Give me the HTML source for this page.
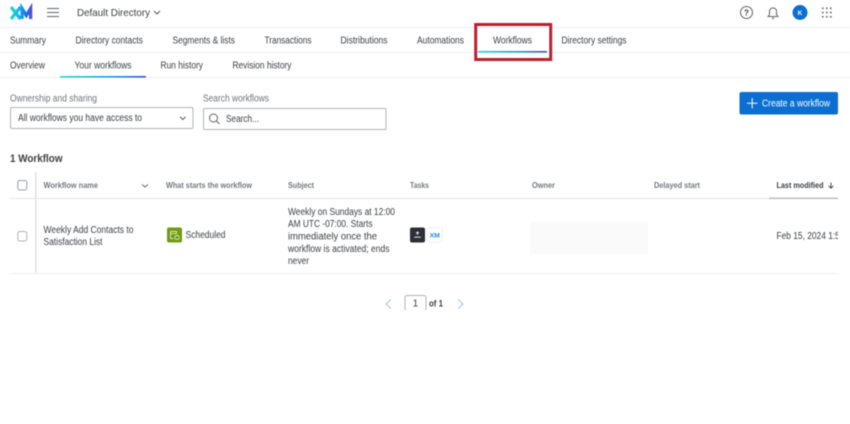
<!DOCTYPE html>
<html lang="en">
<head>
<meta charset="utf-8">
<title>Workflows</title>
<style>
html,body{margin:0;padding:0;background:#fff;width:850px;height:424px;overflow:hidden}
svg{display:block;filter:blur(.45px)}
text{font-family:"Liberation Sans",sans-serif;font-size:9.7px;fill:#3a3e43}
.h{font-size:8.4px;font-weight:bold;fill:#73787e}
.l{fill:#6f7479}
</style>
</head>
<body>
<svg width="850" height="424" viewBox="0 0 850 424" xmlns="http://www.w3.org/2000/svg">
<defs>
<linearGradient id="g" gradientUnits="userSpaceOnUse" x1="10" x2="32" y1="0" y2="0"><stop offset="0" stop-color="#1fe0c0"/><stop offset=".4" stop-color="#12b4f0"/><stop offset=".7" stop-color="#1a78e8"/><stop offset="1" stop-color="#5a48d8"/></linearGradient>
<linearGradient id="u" x1="0" x2="1" y1="0" y2="0"><stop offset="0" stop-color="#2ad4e0"/><stop offset=".6" stop-color="#1a9be0"/><stop offset="1" stop-color="#3f4fc4"/></linearGradient>
<clipPath id="c"><rect x="770" y="225" width="68" height="20"/></clipPath>
</defs>

<!-- top bar -->
<path d="M11 7 L20.5 19 M20.5 7 L11 19" stroke="url(#g)" stroke-width="3.3" fill="none"/>
<path d="M22 19 V8.5 L26.3 15.5 L30.6 8.5 V19" stroke="url(#g)" stroke-width="3.3" fill="none"/>
<path d="M47 8.5H59M47 12.5H59M47 16.5H59" stroke="#5f6368" stroke-width="1.1"/>
<text x="77" y="16" textLength="73" lengthAdjust="spacingAndGlyphs" style="font-size:10.4px">Default Directory</text>
<path d="M154 11 L157 14 L160 11" stroke="#555" stroke-width="1" fill="none"/>

<circle cx="746.5" cy="12.5" r="6" fill="none" stroke="#5f6368" stroke-width="1"/>
<text x="746.5" y="15.5" text-anchor="middle" style="font-size:8px;font-weight:bold">?</text>
<path d="M768 16.5 L769.5 14.5 V10.5 A3.7 3.7 0 0 1 776.5 10.5 V14.5 L778 16.5 Z" fill="none" stroke="#5f6368" stroke-width="1"/>
<path d="M772 18.3 H774" stroke="#5f6368" stroke-width="1.2"/>
<circle cx="800" cy="12.5" r="7.5" fill="#0b6ed0"/>
<text x="800" y="15" text-anchor="middle" style="font-size:6.5px;font-weight:bold;fill:#fff">K</text>
<g fill="#5f6368">
<rect x="822" y="7.5" width="1.6" height="1.6"/><rect x="826" y="7.5" width="1.6" height="1.6"/><rect x="830" y="7.5" width="1.6" height="1.6"/>
<rect x="822" y="11.7" width="1.6" height="1.6"/><rect x="826" y="11.7" width="1.6" height="1.6"/><rect x="830" y="11.7" width="1.6" height="1.6"/>
<rect x="822" y="16" width="1.6" height="1.6"/><rect x="826" y="16" width="1.6" height="1.6"/><rect x="830" y="16" width="1.6" height="1.6"/>
</g>
<rect x="0" y="27" width="850" height="1" fill="#eeeeee"/>

<!-- tabs -->
<text x="10" y="43.5" textLength="36" lengthAdjust="spacingAndGlyphs">Summary</text>
<text x="75.5" y="43.5" textLength="67.5" lengthAdjust="spacingAndGlyphs">Directory contacts</text>
<text x="172.5" y="43.5" textLength="62.5" lengthAdjust="spacingAndGlyphs">Segments &amp; lists</text>
<text x="264.5" y="43.5" textLength="47" lengthAdjust="spacingAndGlyphs">Transactions</text>
<text x="340.5" y="43.5" textLength="47" lengthAdjust="spacingAndGlyphs">Distributions</text>
<text x="417" y="43.5" textLength="47" lengthAdjust="spacingAndGlyphs">Automations</text>
<text x="493" y="43.5" textLength="39" lengthAdjust="spacingAndGlyphs">Workflows</text>
<text x="561.5" y="43.5" textLength="65" lengthAdjust="spacingAndGlyphs">Directory settings</text>
<rect x="0" y="52" width="850" height="1" fill="#eeeeee"/>
<rect x="478" y="51" width="69" height="1.6" fill="url(#u)"/>
<rect x="475.7" y="24.5" width="75" height="35" fill="none" stroke="#b9202f" stroke-width="3"/>

<!-- sub tabs -->
<text x="10" y="68.5" textLength="35" lengthAdjust="spacingAndGlyphs">Overview</text>
<text x="74.5" y="68.5" textLength="57" lengthAdjust="spacingAndGlyphs">Your workflows</text>
<text x="160.5" y="68.5" textLength="42.5" lengthAdjust="spacingAndGlyphs">Run history</text>
<text x="232.5" y="68.5" textLength="59" lengthAdjust="spacingAndGlyphs">Revision history</text>
<rect x="0" y="77" width="850" height="1" fill="#eeeeee"/>
<rect x="60" y="76" width="86" height="1.6" fill="url(#u)"/>

<!-- filters -->
<text class="l" x="10" y="101.5" textLength="87" lengthAdjust="spacingAndGlyphs">Ownership and sharing</text>
<text class="l" x="203" y="101.5" textLength="66" lengthAdjust="spacingAndGlyphs">Search workflows</text>
<rect x="10.5" y="107.5" width="182.5" height="21" rx="1.5" fill="#fff" stroke="#b0b3b7"/>
<text x="18" y="121" textLength="124" lengthAdjust="spacingAndGlyphs">All workflows you have access to</text>
<path d="M180 116.8 L182.8 119.5 L185.6 116.8" fill="none" stroke="#555" stroke-width="1"/>
<rect x="203.5" y="108.5" width="182.5" height="21" rx="1.5" fill="#fff" stroke="#b0b3b7"/>
<circle cx="213.5" cy="118" r="4" fill="none" stroke="#5f6368" stroke-width="1"/>
<path d="M216.5 121 L219.5 124" stroke="#5f6368" stroke-width="1"/>
<text x="226" y="122" textLength="33" lengthAdjust="spacingAndGlyphs">Search...</text>

<rect x="739.5" y="92" width="98.5" height="22.5" rx="2" fill="#0b6ed0"/>
<path d="M747 103.3 H757.5 M752.2 98 V108.5" stroke="#fff" stroke-width="1"/>
<text x="762" y="106.5" textLength="68" lengthAdjust="spacingAndGlyphs" style="fill:#fff">Create a workflow</text>

<text x="10" y="162" textLength="52.5" lengthAdjust="spacingAndGlyphs" style="font-weight:bold;font-size:10.8px">1 Workflow</text>

<!-- table -->
<rect x="35" y="172" width="1.6" height="101" fill="#e4e4e4"/>
<rect x="10" y="198" width="759" height="1" fill="#e6e6e6"/>
<rect x="769" y="197.6" width="69" height="1.4" fill="#b8babc"/>
<rect x="10" y="273" width="828" height="1" fill="#f1f1f1"/>

<rect x="17.8" y="180.5" width="9" height="9.5" rx="2" fill="#fff" stroke="#9a9ea3"/>
<rect x="17.8" y="231.5" width="9" height="9.5" rx="2" fill="#fff" stroke="#aeb1b5"/>

<text class="h" x="43.5" y="188" textLength="54.5" lengthAdjust="spacingAndGlyphs">Workflow name</text>
<path d="M142 184.5 L145 187 L148 184.5" fill="none" stroke="#5f6368" stroke-width=".9"/>
<text class="h" x="166" y="188" textLength="86" lengthAdjust="spacingAndGlyphs">What starts the workflow</text>
<text class="h" x="288" y="188" textLength="26" lengthAdjust="spacingAndGlyphs">Subject</text>
<text class="h" x="410" y="188" textLength="19" lengthAdjust="spacingAndGlyphs">Tasks</text>
<text class="h" x="532" y="188" textLength="23" lengthAdjust="spacingAndGlyphs">Owner</text>
<text class="h" x="654" y="188" textLength="46" lengthAdjust="spacingAndGlyphs">Delayed start</text>
<text class="h" x="776.5" y="188" textLength="47" lengthAdjust="spacingAndGlyphs" style="fill:#3a3e43">Last modified</text>
<path d="M831 182.5 V188 M828.6 185.8 L831 188.2 L833.4 185.8" fill="none" stroke="#3a3e43" stroke-width=".9"/>

<text x="43.5" y="233" textLength="90" lengthAdjust="spacingAndGlyphs">Weekly Add Contacts to</text>
<text x="43.5" y="245" textLength="59" lengthAdjust="spacingAndGlyphs">Satisfaction List</text>

<rect x="167" y="227.5" width="15" height="15" rx="2" fill="#6f9c10"/>
<path d="M170.5 231.5 H176.5 V233.5 M170.5 231.5 V238.5 H173.5 M170.5 233.7 H176.5" fill="none" stroke="#fff" stroke-width=".7"/>
<circle cx="177" cy="237.5" r="2.1" fill="none" stroke="#fff" stroke-width=".7"/>
<text x="185.5" y="238" textLength="40" lengthAdjust="spacingAndGlyphs">Scheduled</text>

<text x="288" y="215" textLength="107" lengthAdjust="spacingAndGlyphs">Weekly on Sundays at 12:00</text>
<text x="288" y="227" textLength="84.5" lengthAdjust="spacingAndGlyphs">AM UTC -07:00. Starts</text>
<text x="288" y="239.5" textLength="89" lengthAdjust="spacingAndGlyphs">immediately once the</text>
<text x="288" y="252" textLength="101.5" lengthAdjust="spacingAndGlyphs">workflow is activated; ends</text>
<text x="288" y="264" textLength="21" lengthAdjust="spacingAndGlyphs">never</text>

<rect x="410" y="227.5" width="15" height="15" rx="2" fill="#2c3036"/>
<path d="M417.5 235 V232 M416 233.4 L417.5 231.9 L419 233.4 M414.2 237.2 H420.8" fill="none" stroke="#fff" stroke-width=".8"/>
<rect x="427.5" y="227.8" width="14.5" height="14.5" rx="2" fill="#fff" stroke="#f0f0f0"/>
<text x="434.7" y="237.3" text-anchor="middle" style="font-size:6.8px;font-weight:bold;fill:#1b8fe6">XM</text>

<rect x="530" y="222" width="118" height="32" fill="#fafafa"/>

<g clip-path="url(#c)"><text x="776.5" y="239" textLength="68" lengthAdjust="spacingAndGlyphs">Feb 15, 2024 1:51</text></g>

<!-- pagination -->
<path d="M391 299.5 L386 304 L391 308.5" fill="none" stroke="#9cc5ee" stroke-width="1.1"/>
<rect x="405" y="295.5" width="21" height="15" rx="2" fill="#fff" stroke="#b0b3b7"/>
<rect x="404" y="310" width="23" height="2" fill="#fff"/>
<text x="415.5" y="306.5" text-anchor="middle">1</text>
<text x="429" y="306.5" textLength="14" lengthAdjust="spacingAndGlyphs" style="font-weight:bold;font-size:9px">of 1</text>
<path d="M458 299.5 L463 304 L458 308.5" fill="none" stroke="#9cc5ee" stroke-width="1.1"/>
</svg>
</body>
</html>
